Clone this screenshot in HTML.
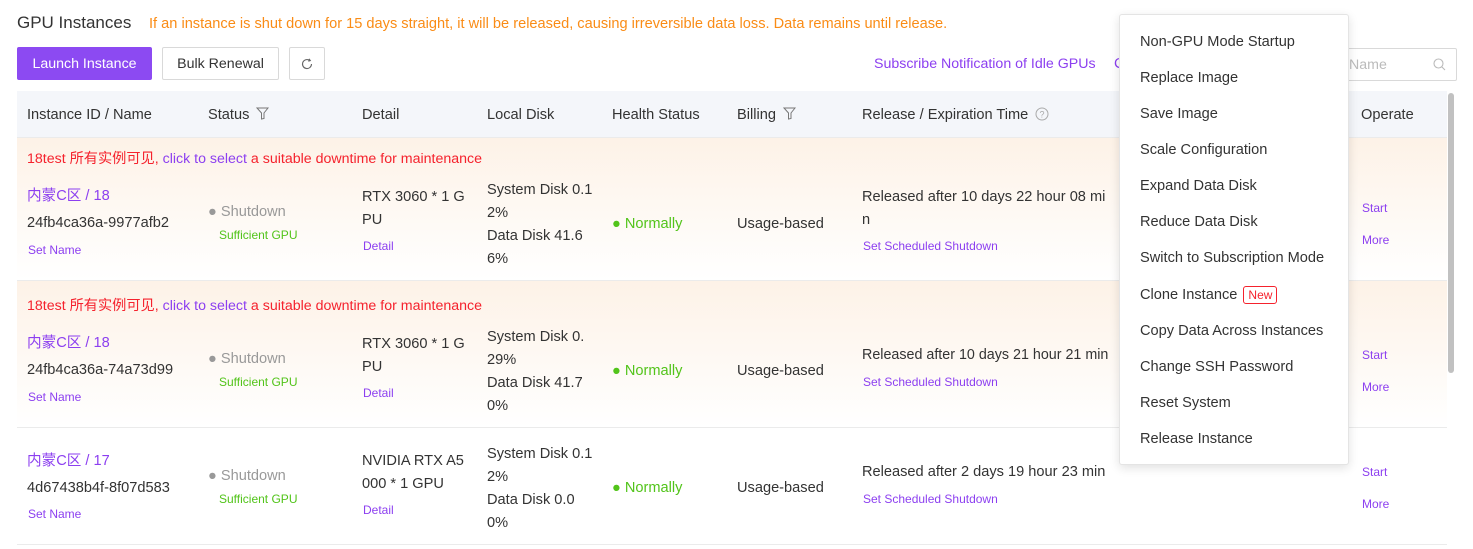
<!DOCTYPE html>
<html><head><meta charset="utf-8"><style>
*{box-sizing:border-box;margin:0;padding:0}
body{width:1473px;height:549px;overflow:hidden;background:#fff;font-family:"Liberation Sans","Noto Sans CJK SC",sans-serif;font-size:14.6px;color:#333;position:relative}
.a{position:absolute;white-space:nowrap;margin-top:2px}
.a.s,.a.ml{margin-top:0}
.p{color:#8c3ff0}
.s{font-size:12px}
.btn{position:absolute;height:33px;border:1px solid #d9d9d9;border-radius:2px;display:flex;align-items:center;justify-content:center;font-size:14.2px;color:#333;background:#fff;padding-top:1px}
.row{position:absolute;left:17px;width:1430px;border-bottom:1px solid #ebebeb}
.g{color:#52c41a}
.gr{color:#999}
.menu{position:absolute;left:1119px;top:14px;width:230px;height:451px;background:#fff;border:1px solid #e4e4e4;border-radius:3px;box-shadow:0 3px 10px rgba(0,0,0,.12)}
.menu div{position:absolute;left:20px;font-size:14.6px;color:#333;white-space:nowrap;margin-top:1px}
</style></head><body>
<div class="a" style="left:17px;top:11px;font-size:17px;color:#333">GPU Instances</div>
<div class="a" style="left:149px;top:14px;color:#fa8c16">If an instance is shut down for 15 days straight, it will be released, causing irreversible data loss. Data remains until release.</div>
<div class="btn" style="left:17px;top:47px;width:135px;background:#8c4af2;border-color:#8c4af2;color:#fff">Launch Instance</div>
<div class="btn" style="left:162px;top:47px;width:117px">Bulk Renewal</div>
<div class="btn" style="left:289px;top:47px;width:36px"><svg width="12" height="12" viewBox="0 0 12 12"><path d="M10.5 6A4.5 4.5 0 1 1 8.5 2.3" fill="none" stroke="#666" stroke-width="1.1"/><path d="M8 0.8L9.3 2.6 7.3 3.2" fill="none" stroke="#666" stroke-width="1.1"/></svg></div>
<div class="a p" style="left:874px;top:54px;font-size:14.2px">Subscribe Notification of Idle GPUs</div>
<div class="a p" style="left:1114px;top:54px">C</div>
<div class="btn" style="left:1330px;top:48px;width:127px;justify-content:flex-start;padding-left:18px;color:#bbb">Name<svg style="position:absolute;right:10px;top:9px" width="13" height="13" viewBox="0 0 13 13"><circle cx="5.5" cy="5.5" r="4.5" fill="none" stroke="#bbb" stroke-width="1.1"/><path d="M9 9l3 3" stroke="#bbb" stroke-width="1.1"/></svg></div>

<div class="row" style="top:91px;height:47px;background:#f4f6fa"></div>
<div class="a" style="left:27px;top:105px">Instance ID / Name</div>
<div class="a" style="left:208px;top:105px">Status <svg width="13" height="13" viewBox="0 0 13 13" style="vertical-align:-1px;margin-left:3px"><path d="M1 1h11L8 6v5.5L5.5 12V6z" fill="none" stroke="#777" stroke-width="1"/></svg></div>
<div class="a" style="left:362px;top:105px">Detail</div>
<div class="a" style="left:487px;top:105px">Local Disk</div>
<div class="a" style="left:612px;top:105px">Health Status</div>
<div class="a" style="left:737px;top:105px">Billing <svg width="13" height="13" viewBox="0 0 13 13" style="vertical-align:-1px;margin-left:3px"><path d="M1 1h11L8 6v5.5L5.5 12V6z" fill="none" stroke="#777" stroke-width="1"/></svg></div>
<div class="a" style="left:862px;top:105px">Release / Expiration Time <svg width="14" height="14" viewBox="0 0 14 14" style="vertical-align:-2px;margin-left:3px"><circle cx="7" cy="7" r="6" fill="none" stroke="#aaa"/><text x="7" y="10.5" font-size="9" text-anchor="middle" fill="#aaa" font-family="Liberation Sans">?</text></svg></div>
<div class="a" style="left:1361px;top:105px">Operate</div>

<div class="row" style="top:138px;height:143px;background:linear-gradient(#fdf2e7,#fff)"></div>
<div class="row" style="top:281px;height:147px;background:linear-gradient(#fdf2e7,#fff)"></div>
<div class="row" style="top:428px;height:117px"></div>

<!-- row1 -->
<div class="a" style="left:27px;top:146px;color:#f5222d;font-size:14.2px">18test 所有实例可见, <span class="p">click to select</span> a suitable downtime for maintenance</div>
<div class="a p" style="left:27px;top:182px">内蒙C区 / 18</div>
<div class="a" style="left:27px;top:213px">24fb4ca36a-9977afb2</div>
<div class="a p s" style="left:28px;top:243px">Set Name</div>
<div class="a gr" style="left:208px;top:202px">● Shutdown</div>
<div class="a g s" style="left:219px;top:228px">Sufficient GPU</div>
<div class="a ml" style="left:362px;top:186px;line-height:23px">RTX 3060 * 1 G<br>PU</div>
<div class="a p s" style="left:363px;top:239px">Detail</div>
<div class="a ml" style="left:487px;top:179px;line-height:23px">System Disk 0.1<br>2%<br>Data Disk 41.6<br>6%</div>
<div class="a g" style="left:612px;top:214px">● Normally</div>
<div class="a" style="left:737px;top:214px">Usage-based</div>
<div class="a ml" style="left:862px;top:186px;line-height:23px">Released after 10 days 22 hour 08 mi<br>n</div>
<div class="a p s" style="left:863px;top:239px">Set Scheduled Shutdown</div>
<div class="a p s" style="left:1362px;top:201px">Start</div>
<div class="a p s" style="left:1362px;top:233px">More</div>

<!-- row2 -->
<div class="a" style="left:27px;top:293px;color:#f5222d;font-size:14.2px">18test 所有实例可见, <span class="p">click to select</span> a suitable downtime for maintenance</div>
<div class="a p" style="left:27px;top:329px">内蒙C区 / 18</div>
<div class="a" style="left:27px;top:360px">24fb4ca36a-74a73d99</div>
<div class="a p s" style="left:28px;top:390px">Set Name</div>
<div class="a gr" style="left:208px;top:349px">● Shutdown</div>
<div class="a g s" style="left:219px;top:375px">Sufficient GPU</div>
<div class="a ml" style="left:362px;top:333px;line-height:23px">RTX 3060 * 1 G<br>PU</div>
<div class="a p s" style="left:363px;top:386px">Detail</div>
<div class="a ml" style="left:487px;top:326px;line-height:23px">System Disk 0.<br>29%<br>Data Disk 41.7<br>0%</div>
<div class="a g" style="left:612px;top:361px">● Normally</div>
<div class="a" style="left:737px;top:361px">Usage-based</div>
<div class="a" style="left:862px;top:345px;font-size:14.3px">Released after 10 days 21 hour 21 min</div>
<div class="a p s" style="left:863px;top:375px">Set Scheduled Shutdown</div>
<div class="a p s" style="left:1362px;top:348px">Start</div>
<div class="a p s" style="left:1362px;top:380px">More</div>

<!-- row3 -->
<div class="a p" style="left:27px;top:447px">内蒙C区 / 17</div>
<div class="a" style="left:27px;top:478px">4d67438b4f-8f07d583</div>
<div class="a p s" style="left:28px;top:507px">Set Name</div>
<div class="a gr" style="left:208px;top:466px">● Shutdown</div>
<div class="a g s" style="left:219px;top:492px">Sufficient GPU</div>
<div class="a ml" style="left:362px;top:450px;line-height:23px">NVIDIA RTX A5<br>000 * 1 GPU</div>
<div class="a p s" style="left:363px;top:503px">Detail</div>
<div class="a ml" style="left:487px;top:443px;line-height:23px">System Disk 0.1<br>2%<br>Data Disk 0.0<br>0%</div>
<div class="a g" style="left:612px;top:478px">● Normally</div>
<div class="a" style="left:737px;top:478px">Usage-based</div>
<div class="a" style="left:862px;top:462px">Released after 2 days 19 hour 23 min</div>
<div class="a p s" style="left:863px;top:492px">Set Scheduled Shutdown</div>
<div class="a p s" style="left:1362px;top:465px">Start</div>
<div class="a p s" style="left:1362px;top:497px">More</div>

<div class="a" style="left:1448px;top:93px;width:6px;height:280px;background:#c1c1c1;border-radius:3px;margin-top:0"></div>

<div class="menu">
<div style="top:18px">Non-GPU Mode Startup</div>
<div style="top:54px">Replace Image</div>
<div style="top:90px">Save Image</div>
<div style="top:126px">Scale Configuration</div>
<div style="top:162px">Expand Data Disk</div>
<div style="top:198px">Reduce Data Disk</div>
<div style="top:234px">Switch to Subscription Mode</div>
<div style="top:270px">Clone Instance <span style="display:inline-block;border:1px solid #f5222d;color:#f5222d;font-size:12px;padding:1px 4px;border-radius:3px;margin-left:2px">New</span></div>
<div style="top:307px">Copy Data Across Instances</div>
<div style="top:343px">Change SSH Password</div>
<div style="top:379px">Reset System</div>
<div style="top:415px">Release Instance</div>
</div>
</body></html>
